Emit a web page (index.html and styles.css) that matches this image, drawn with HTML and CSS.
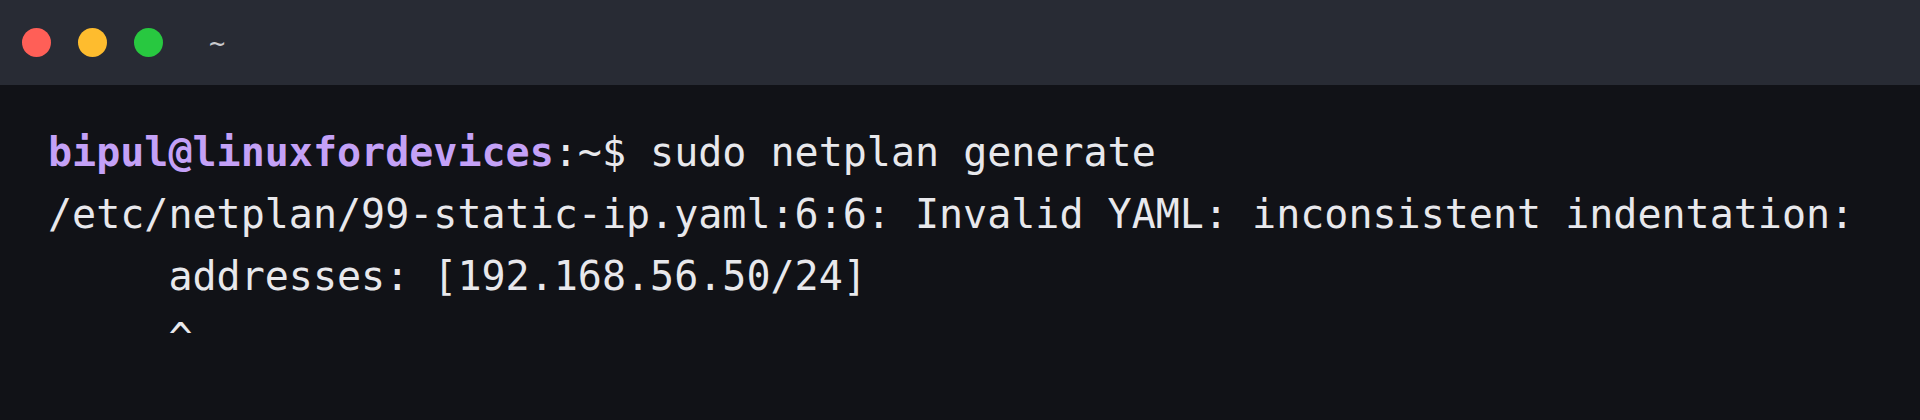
FILE: index.html
```html
<!DOCTYPE html>
<html lang="en">
<head>
<meta charset="utf-8">
<title>Terminal</title>
<link rel="stylesheet" href="styles.css">
</head>
<body>
<div class="window">
  <div class="titlebar">
    <div class="dots">
      <span class="dot red"></span>
      <span class="dot yellow"></span>
      <span class="dot green"></span>
    </div>
    <span class="title">~</span>
  </div>
  <div class="terminal">
<div class="line"><span class="user">bipul@linuxfordevices</span>:~$ sudo netplan generate</div>
<div class="line">/etc/netplan/99-static-ip.yaml:6:6: Invalid YAML: inconsistent indentation:</div>
<div class="line">     addresses: [192.168.56.50/24]</div>
<div class="line">     ^</div>
  </div>
</div>
</body>
</html>
```
FILE: styles.css
```css
html, body {
  margin: 0;
  padding: 0;
  background: #111217;
}
.window {
  width: 1920px;
  height: 420px;
  background: #111217;
  overflow: hidden;
}
.titlebar {
  height: 85px;
  background: #282b34;
  display: flex;
  align-items: center;
  padding-left: 22px;
  box-sizing: border-box;
}
.dots {
  display: flex;
  gap: 27px;
}
.dot {
  width: 29px;
  height: 29px;
  border-radius: 50%;
  display: block;
}
.red { background: #ff5f57; }
.yellow { background: #febc2e; }
.green { background: #28c840; }
.title {
  margin-left: 46px;
  color: #c9cacd;
  font-family: "DejaVu Sans Mono", monospace;
  font-size: 27px;
  line-height: 1;
}
.terminal {
  padding: 36px 0 0 48px;
  font-family: "DejaVu Sans Mono", monospace;
  font-size: 40px;
  line-height: 62px;
  color: #e8e8ec;
}
.line {
  white-space: pre;
}
.user {
  color: #c4a1f7;
  font-weight: bold;
}
```
